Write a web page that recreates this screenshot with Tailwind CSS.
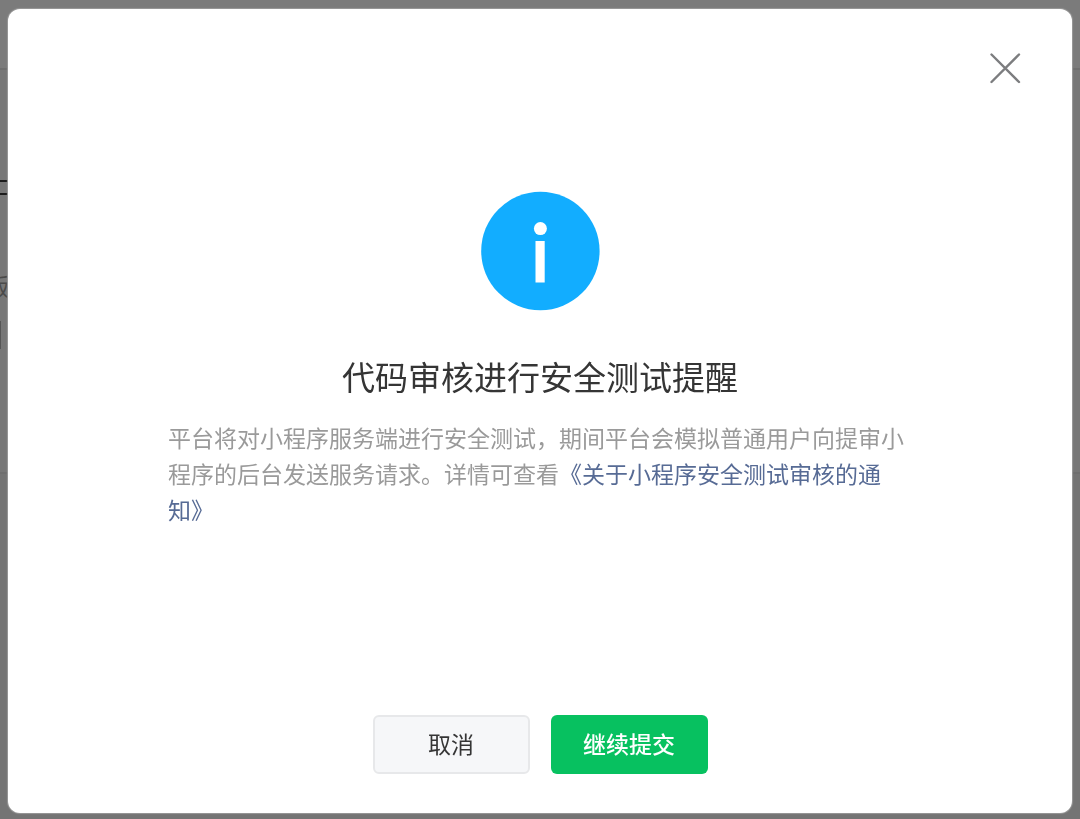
<!DOCTYPE html>
<html lang="zh-CN">
<head>
    <meta charset="UTF-8">
    <meta name="viewport" content="width=device-width, initial-scale=1.0">
    <title>代码审核进行安全测试提醒</title>
    <script src="https://cdn.jsdelivr.net/npm/@tailwindcss/browser@4"></script>
</head>
<body class="h-screen overflow-hidden bg-[#777777] font-['Noto_Sans_CJK_SC',sans-serif]">
    <!-- Page behind the dialog -->
    <div class="flex h-full flex-col" aria-hidden="true">
        <div class="h-[70px] shrink-0 border-b-2 border-[#6f6f6f] bg-[#7b7b7b]"></div>
        <div class="h-[402px] shrink-0 bg-[#777777] pt-[110px]">
            <div class="h-[15px] w-4 border-y-2 border-[#1c1c1c]"></div>
            <div class="-ml-[14px] mt-[72px] text-[23px] leading-[36px] text-[#4a4a4a]">版</div>
            <div class="mt-[18px] h-7 w-px bg-[#555555]"></div>
        </div>
        <div class="grow border-t-2 border-[#6f6f6f] bg-[#747474]"></div>
    </div>

    <!-- Dialog -->
    <div class="fixed inset-0 flex px-2 pt-[9px] pb-[6px]">
        <div role="dialog" aria-modal="true" aria-labelledby="dialog-title" class="flex grow flex-col rounded-xl bg-white pb-[39px] shadow-[0_0_1px_1px_#999999]">
            <div class="flex justify-end pt-[43px] pr-[51px]">
                <button type="button" aria-label="关闭" class="cursor-pointer">
                    <svg class="block size-8" viewBox="0 0 32 32" fill="none" stroke="#7c7d7f" stroke-width="2.4" stroke-linecap="round">
                        <path d="M2.5 2.5 30 30M30 2.5 2.5 30"/>
                    </svg>
                </button>
            </div>

            <div class="flex grow flex-col items-center pt-[107px]">
                <svg class="block size-[120px]" viewBox="0 0 120 120">
                    <circle cx="60.4" cy="60" r="59.2" fill="#12adff"/>
                    <circle cx="60.4" cy="37.6" r="6.5" fill="#fff"/>
                    <path d="M55.5 50h9.2v41.5h-9.2z" fill="#fff"/>
                </svg>
                <h1 id="dialog-title" class="mt-[41px] text-[33px] leading-[48px] text-[#353535]">代码审核进行安全测试提醒</h1>
                <p class="mt-[19px] w-full max-w-[744px] text-[23px] leading-[36px] text-[#9a9a9a]">平台将对小程序服务端进行安全测试，期间平台会模拟普通用户向提审小程序的后台发送服务请求。详情可查看<a href="#" class="text-[#576b95]">《关于小程序安全测试审核的通知》</a></p>
            </div>

            <div class="flex justify-center gap-[21px]">
                <button type="button" class="h-[59px] w-[157px] cursor-pointer rounded-md border-2 border-[#e7e8ea] bg-[#f6f7f9] pb-0.5 text-[23px] text-[#353535]">取消</button>
                <button type="button" class="h-[59px] w-[157px] cursor-pointer rounded-md bg-[#07c160] pb-0.5 text-[23px] font-medium text-white">继续提交</button>
            </div>
        </div>
    </div>
</body>
</html>
